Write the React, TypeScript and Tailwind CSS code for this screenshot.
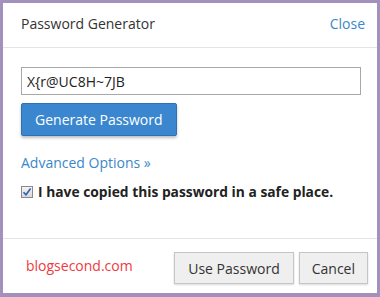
export default function App() {
  return (
    <div className="w-[380px] h-[297px] bg-white border-l-[3px] border-t-[3px] border-r-[3px] border-b-[4px] border-[#a291bd] flex flex-col font-['Open_Sans',sans-serif] text-[#333]">
      {/* header */}
      <div className="h-[45px] flex items-start justify-between pl-[18px] pr-[12px] pt-[11px] border-b border-[#e5e5e5]">
        <span className="text-[14px] leading-[20px]">Password Generator</span>
        <a className="text-[14px] leading-[20px] text-[#3a87c9]">Close</a>
      </div>

      {/* body */}
      <div className="flex-1 px-[18px] pt-[19px] flex flex-col items-start">
        <input
          readOnly
          value="X{r@UC8H~7JB"
          className="w-[340px] h-[28px] border border-[#a8a8a8] px-[5px] text-[14px] text-[#222] outline-none"
        />
        <button className="mt-[8px] h-[33px] px-[13px] bg-[#3a87cf] border border-[#2f72b3] rounded-[2px] text-white text-[14px] shadow-[0_2px_3px_rgba(0,0,0,0.25)]">
          Generate Password
        </button>
        <a className="mt-[17px] text-[14px] leading-[20px] text-[#3a87c9]">Advanced Options »</a>
        <label className="mt-[9px] flex items-center gap-[5px]">
          <span className="w-[12px] h-[12px] border border-[#8a8a8a] bg-gradient-to-b from-[#f4f4f4] to-[#d8d8d8] flex items-center justify-center">
            <svg viewBox="0 0 10 10" className="w-[10px] h-[10px]">
              <path d="M1.5 5.2 L4 7.8 L8.6 1.6" fill="none" stroke="#2f5fb5" strokeWidth="1.6" />
            </svg>
          </span>
          <span className="text-[13.8px] leading-[20px] font-bold text-[#222]">I have copied this password in a safe place.</span>
        </label>
      </div>

      {/* footer */}
      <div className="h-[55px] border-t border-[#e5e5e5] flex items-start justify-between pl-[23px] pr-[9px]">
        <span className="mt-[17px] text-[14px] leading-[20px] text-[#f0393e]">blogsecond.com</span>
        <div className="mt-[13px] flex gap-[5px]">
          <button className="h-[32px] px-[13px] bg-[#efefef] border border-[#c5c5c5] text-[14px] text-[#333] shadow-[0_1px_2px_rgba(0,0,0,0.15)]">
            Use Password
          </button>
          <button className="h-[32px] px-[12px] bg-[#efefef] border border-[#c5c5c5] text-[14px] text-[#333] shadow-[0_1px_2px_rgba(0,0,0,0.15)]">
            Cancel
          </button>
        </div>
      </div>
    </div>
  );
}
